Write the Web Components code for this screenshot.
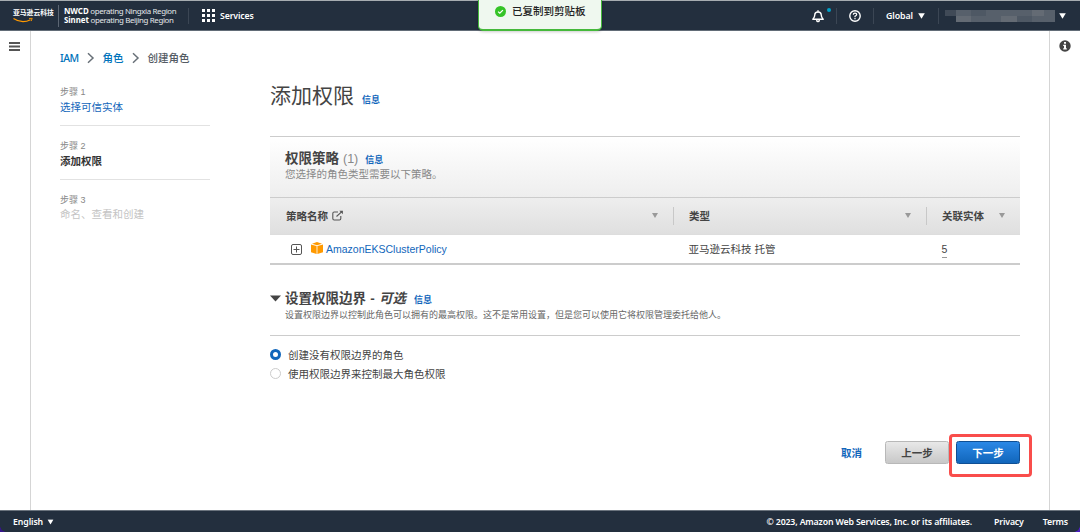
<!DOCTYPE html>
<html>
<head>
<meta charset="utf-8">
<title>IAM - 创建角色</title>
<style>
html,body{margin:0;width:1080px;height:532px;overflow:hidden;background:#fff}
body{font-family:"Liberation Sans","Noto Sans CJK SC",sans-serif;font-size:10.5px;color:#444}
</style>
</head>
<body>
<iam-console></iam-console>
<script>
const define=(name,css,html)=>{
  const t=document.createElement('template');
  t.innerHTML=`<style>*,*::after{box-sizing:border-box}${css}</style>${html}`;
  customElements.define(name,class extends HTMLElement{
    constructor(){super();this.attachShadow({mode:'open'}).append(t.content.cloneNode(true));}
  });
};

define('info-link',`
:host{display:inline-block;font-size:9px;line-height:12px;font-weight:700;color:#1166bb}`,`<slot></slot>`);

define('nav-sep',`
:host{display:block;width:1px;height:16px;background:#3b4654;flex:none}`,``);

define('caret-down',`
:host{display:block;width:7px;height:6px;flex:none;color:#fff}svg{display:block}`,
`<svg width="7" height="6" viewBox="0 0 7 6"><path d="M.2.3h6.6L3.5 5.8z" fill="currentColor"/></svg>`);

define('console-header',`
:host{display:flex;align-items:center;height:31px;background:#232f3e;border-top:1px solid #a7adb1;border-bottom:1px solid #626c77;color:#fff;font-family:"Noto Sans","Noto Sans CJK SC",sans-serif;padding-right:14px}
.logo{margin-left:13px;width:45px;height:20px;display:flex;flex-direction:column}
.logo span{font-size:6.8px;line-height:10px;font-weight:700;white-space:nowrap;height:9px;margin-top:2px}
.logo svg{margin-top:0}
.regions{border-left:1px solid #5c6673;padding-left:5px;height:22px;width:130px;font-size:7.9px;letter-spacing:-.36px;line-height:9px;padding-top:2px;white-space:nowrap;color:#e4e7ea}
.regions div{height:9px}.regions b{color:#fff;letter-spacing:-.05px}
.services{display:flex;align-items:center;gap:5px;margin-left:13px;font-size:8.7px;font-weight:600;line-height:14px;letter-spacing:-.1px}
.right{display:flex;align-items:center;margin-left:auto}
.bell{position:relative;width:14px;height:14px;margin-right:14px}.bell i{position:absolute;left:16px;top:-1px;width:4px;height:4px;border-radius:50%;background:#00a1c9}
svg{display:block}
.global{display:flex;align-items:center;gap:5px;font-size:8.8px;font-weight:600;letter-spacing:-.08px;margin:0 13px 0 12px}
.account{width:110px;height:12px;margin:0 4px 0 6px}`,`
<div class="logo"><span>亚马逊云科技</span><svg width="22" height="7" viewBox="0 0 22 7"><path d="M.5 1.500Q9 7.200 17.500 2.700" fill="none" stroke="#ff9900" stroke-width="1.300"/><path d="M16 1.500l3.200-.200-1 2.800" fill="none" stroke="#ff9900" stroke-width=".9"/></svg></div>
<div class="regions"><div><b>NWCD</b> operating Ningxia Region</div><div><b>Sinnet</b> operating Beijing Region</div></div>
<nav-sep></nav-sep>
<div class="services"><svg width="13" height="13" fill="#fff"><path d="M0 0h3v3H0zM5 0h3v3H5zM10 0h3v3h-3zM0 5h3v3H0zM5 5h3v3H5zM10 5h3v3h-3zM0 10h3v3H0zM5 10h3v3H5zM10 10h3v3h-3z"/></svg><span>Services</span></div>
<div class="right">
<div class="bell"><svg width="14" height="14" viewBox="0 0 14 14" fill="none" stroke="#fff" stroke-width="1.4"><path d="M1.800 10.200Q3.800 8.400 3.800 5.800Q3.800 3 7 3Q10.200 3 10.200 5.800Q10.200 8.400 12.200 10.200z" stroke-linejoin="round"/><path d="M7 1.200v1.600M5.500 10.500Q5.600 12.500 7 12.500T8.500 10.500"/></svg><i></i></div>
<nav-sep style="margin-left:-3px;margin-right:12px"></nav-sep>
<svg width="12" height="12" viewBox="0 0 12 12" style="margin-right:12px" fill="none" stroke="#fff" stroke-width="1.4"><circle cx="6" cy="6" r="5.200"/><path d="M4.300 4.800Q4.300 3.200 6 3.200T7.700 4.600Q7.700 5.600 6 6.200V7.200M6 8.100v1.200" stroke-width="1.200"/></svg>
<nav-sep></nav-sep>
<div class="global"><span>Global</span><caret-down></caret-down></div>
<nav-sep></nav-sep>
<svg class="account" viewBox="0 0 110 12"><path d="M0 0h11v6H0z" fill="#404a57"/><path d="M11 0h99v12H11z" fill="#57606b"/><path d="M11 6h15v6H11zM56 6h16v6H56zM87 0h12v6H87z" fill="#646b74"/><path d="M26 0h15v6H26zM72 6h15v6H72z" fill="#4e5864"/></svg>
<caret-down></caret-down></div>`);

define('copy-toast',`
:host{position:absolute;left:478px;top:-8px;width:124px;height:39px;display:flex;align-items:center;padding:0 0 1px 16px;background:#eff8ef;border:1px solid #45b93b;border-bottom-width:2px;border-radius:5px;box-shadow:0 1px 3px #0003;font-size:10.5px;line-height:16px;font-weight:500;color:#222}
svg{display:block;margin:1px 6px 0 0}`,`
<svg width="11" height="11" viewBox="0 0 11 11"><circle cx="5.500" cy="5.500" r="5.500" fill="#35c427"/><path d="M3.100 5.600l1.700 1.600 3.100-3.100" fill="none" stroke="#fff" stroke-width="1.300"/></svg><slot></slot>`);

define('console-footer',`
:host{display:flex;align-items:center;height:22px;padding:0 12px 0 13px;background:#232f3e;border-top:1px solid #6b747e;color:#fff;font:600 8.75px/14px "Noto Sans",sans-serif;letter-spacing:-.15px;white-space:nowrap;position:relative}
:host::before,:host::after{content:"";position:absolute;bottom:0;width:6px;height:6px}
:host::before{left:0;background:radial-gradient(circle at 100% 0,#0000 5.500px,#35148a 6px)}
:host::after{right:0;background:radial-gradient(circle at 0 0,#0000 5.500px,#4a1fc0 6px)}
.lang{display:flex;align-items:center;gap:4px}.links{margin-left:auto;display:flex;gap:23px}
.lang span{letter-spacing:-.1px}
caret-down{transform:scale(.9)}`,`
<div class="lang"><span>English</span><caret-down></caret-down></div>
<div class="links"><span>© 2023, Amazon Web Services, Inc. or its affiliates.</span><span style="margin-left:-1px">Privacy</span><span style="margin-left:-4px">Terms</span></div>`);

define('crumb-trail',`
:host{display:flex;align-items:center;height:16px;font-size:10.5px;line-height:16px;font-family:"Noto Sans","Noto Sans CJK SC",sans-serif;font-weight:500;color:#0073bb}
svg{margin:0 7.500px}.iam{width:18.500px;letter-spacing:-.5px}.here{color:#545b64}`,`
<span class="iam">IAM</span><svg width="9" height="12"><path d="M2 1.200l5 4.800-5 4.800" fill="none" stroke="#687078" stroke-width="1.500"/></svg><span>角色</span><svg width="9" height="12"><path d="M2 1.200l5 4.800-5 4.800" fill="none" stroke="#687078" stroke-width="1.500"/></svg><span class="here">创建角色</span>`);

define('wizard-step',`
:host{display:block;height:54px;border-bottom:1px solid #e2e2e2;padding-top:13px;color:#1166bb}
:host([state=current]){color:#333;font-weight:700}
:host([state=todo]){color:#c4c4c4;border:0}
.n{font-size:9px;line-height:14px;color:#888;font-weight:400}.t{line-height:16px}
:host([state=todo]) .t{margin-top:-1px}`,`
<div class="n"><slot name="label"></slot></div><div class="t"><slot></slot></div>`);

define('col-head',`
:host{display:flex;align-items:center;height:18px;padding:0 15px 0 16px;font-weight:700;line-height:16px}
:host([divided]){border-left:1px solid #c8c8c8;padding-left:15px}
svg{display:block}.sort{margin-left:auto}`,`
<slot></slot><svg class="sort" width="6" height="5"><path d="M0 0h6L3 5z" fill="#999"/></svg>`);

define('policy-table',`
:host{display:block;border-top:1px solid #ccc;border-bottom:2px solid #ccc;height:129px}
.top{height:60px;background:linear-gradient(#fff,#eee);padding:13px 15px 0}
.h{display:flex;align-items:center;font-size:13.5px;line-height:18px;height:18px;font-weight:700}.h span{font-weight:400;color:#888;font-size:12.5px;margin:0 7px 0 4px}
.h info-link{margin-top:2px}
.sub{line-height:15px;color:#888;margin-top:-1px}
.grid{display:grid;grid-template-columns:403px 253px 94px;align-items:center}
.head{height:38px;background:linear-gradient(#eee,#dfdfdf);border-top:1px solid #ccc;border-bottom:1px solid #ddd;padding-bottom:1px}
.row{height:28px}.name{display:flex;align-items:center;padding-left:21px;color:#1166bb;line-height:16px;font-size:10.500px}
svg{display:block}.cell{line-height:16px;padding-left:15.500px}.cell u{text-decoration:none;border-bottom:1px dashed #999;padding-bottom:1px;display:inline-block;line-height:14px;margin-top:1px}`,`
<div class="top"><div class="h">权限策略<span>(1)</span><info-link>信息</info-link></div><div class="sub">您选择的角色类型需要以下策略。</div></div>
<div class="grid head"><col-head>策略名称<svg style="margin-left:4px" width="12" height="11" viewBox="0 0 12 11" fill="none" stroke="#555" stroke-width="1.100"><path d="M6 2H2.200Q.8 2 .8 3.400v5.200Q.8 10 2.200 10h5.200Q8.800 10 8.800 8.600V6"/><path d="M4.500 6.500l5.600-5.200"/><path d="M7.300 .7h3.600v3.600z" fill="#555" stroke="none"/></svg></col-head><col-head divided>类型</col-head><col-head divided>关联实体</col-head></div>
<div class="grid row"><div class="name"><svg width="11" height="11" fill="none" stroke="#555"><rect x=".5" y=".5" width="10" height="10" rx="1.500"/><path d="M2.500 5.500h6M5.500 2.500v6"/></svg><svg style="margin:-3px 3px 0 9px" width="12" height="12" viewBox="0 0 12 12"><path d="M1 1.700L6 0l5 1.700L6 3.200zM0 2.500l5.600 1.600V12L0 10.200zM12 2.500L6.400 4.100V12L12 10.200z" fill="#f90"/></svg>AmazonEKSClusterPolicy</div><div class="cell">亚马逊云科技 托管</div><div class="cell"><u>5</u></div></div>`);

define('boundary-panel',`
:host{display:block;margin-top:25px}
.h{display:flex;align-items:center;font-size:13.500px;font-weight:700;line-height:18px;height:18px;white-space:pre;word-spacing:.5px}
.h info-link{margin:2px 0 0 8px}.h svg{margin:-1px 4px 0 0}
.d{font-size:9px;line-height:14px;color:#666;padding-left:15px;margin-top:0;height:28px;border-bottom:1px solid #ccc}
.opts{padding-top:9px}.opt{display:flex;align-items:center;height:19px;gap:7px;line-height:16px}
.opt i{width:11px;height:11px;border-radius:50%;border:1px solid #ccc}.opt i.on{border:3.500px solid #1166bb}`,`
<div class="h"><svg width="11" height="7"><path d="M0 .5h11L5.500 6.500z" fill="#444"/></svg>设置权限边界 - <i>可选</i><info-link>信息</info-link></div>
<div class="d">设置权限边界以控制此角色可以拥有的最高权限。这不是常用设置，但是您可以使用它将权限管理委托给他人。</div>
<div class="opts"><div class="opt"><i class="on"></i>创建没有权限边界的角色</div><div class="opt"><i></i>使用权限边界来控制最大角色权限</div></div>`);

define('wizard-button',`
:host{display:flex;align-items:center;justify-content:center;box-sizing:border-box;width:64px;height:23px;border:1px solid #b8b8b8;border-radius:2.500px;background:linear-gradient(#e8e8e8,#c8c8c8);font-weight:700;line-height:16px;color:#444}
:host([primary]){background:linear-gradient(#2b88e6,#1166bb);border-color:#0f4f94;color:#fff}`,`<slot></slot>`);

define('wizard-actions',`
:host{display:flex;align-items:center;justify-content:flex-end;height:23px;margin-top:58px}
.cancel{font-weight:700;color:#1166bb;line-height:16px;margin-right:23px}
.next{position:relative;margin-left:7px}.next::after{content:"";position:absolute;left:-7px;top:-7.500px;width:83px;height:43px;border:3px solid #f94d4b;border-radius:4px}`,`
<span class="cancel">取消</span><wizard-button>上一步</wizard-button><div class="next"><wizard-button primary>下一步</wizard-button></div>`);

define('iam-console',`
:host{display:flex;flex-direction:column;height:532px;position:relative}
.body{flex:1;display:grid;grid-template-columns:31px 1018px 31px;min-height:0}
.rail{border-right:1px solid #d5d5d5;padding:11px 0 0 9px}.rail.r{border:0;border-left:1px solid #d5d5d5;padding:9px 0 0 9px}
svg{display:block}
.page{padding:19px 29px 0;display:flex;flex-direction:column}
.cols{display:grid;grid-template-columns:150px 750px;gap:60px}
.steps{padding-top:6px}
h1{margin:16px 0 0;height:28px;font-weight:400;font-size:21px;line-height:28px;display:flex;align-items:center}
h1 info-link{margin:8px 0 0 8px}
policy-table{margin-top:26px}`,`
<console-header></console-header>
<div class="body">
<div class="rail"><svg width="12" height="9"><path d="M0 0h11v2H0zM0 3.500h11v2H0zM0 7h11v2H0z" fill="#545454"/></svg></div>
<div class="page"><crumb-trail></crumb-trail>
<div class="cols"><div class="steps"><wizard-step><span slot="label">步骤 1</span>选择可信实体</wizard-step><wizard-step state="current"><span slot="label">步骤 2</span>添加权限</wizard-step><wizard-step state="todo"><span slot="label">步骤 3</span>命名、查看和创建</wizard-step></div>
<div><h1>添加权限<info-link>信息</info-link></h1><policy-table></policy-table><boundary-panel></boundary-panel><wizard-actions></wizard-actions></div></div></div>
<div class="rail r"><svg width="12" height="12"><circle cx="6" cy="6" r="5.700" fill="#444"/><path d="M5 2h2v1.800H5zM4.200 4.800H7v3.400h.8v1.200H4.200V8.200H5V6h-.8z" fill="#fff"/></svg></div>
</div>
<console-footer></console-footer>
<copy-toast>已复制到剪贴板</copy-toast>`);
</script>
</body>
</html>
